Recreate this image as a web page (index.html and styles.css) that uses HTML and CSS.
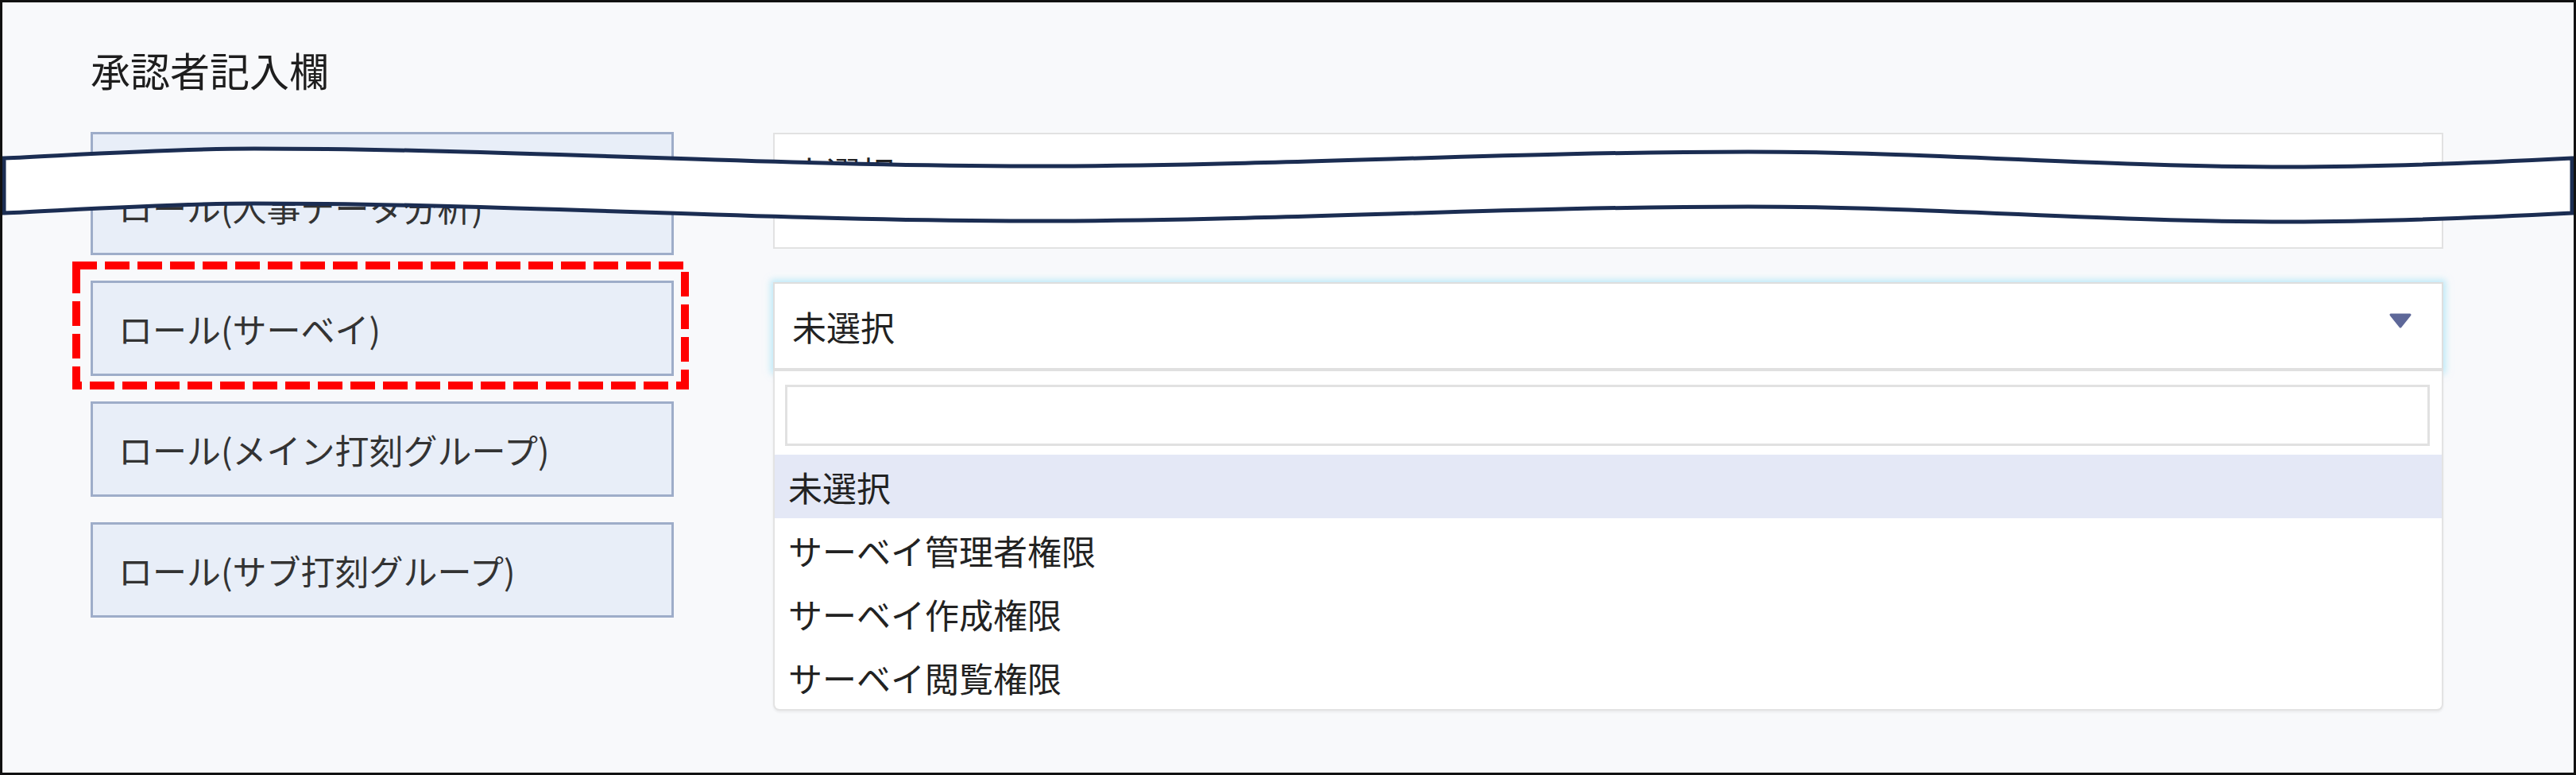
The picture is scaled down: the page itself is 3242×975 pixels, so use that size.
FILE: index.html
```html
<!DOCTYPE html>
<html lang="ja">
<head>
  <meta charset="UTF-8">
  <title>承認者記入欄</title>
  <link rel="stylesheet" href="styles.css">
</head>
<body>
  <div class="frame">
    <h2 class="title">承認者記入欄</h2>

    <div class="rows">
      <div class="row">
        <div class="label first">ロール(人事データ分析)</div>
        <div class="field">未選択</div>
      </div>

      <div class="row">
        <div class="label marked">
          ロール(サーベイ)
          <!-- 赤い点線の枠 -->
          <svg class="mark" width="776" height="161" viewBox="0 0 776 161">
            <rect x="5" y="5" width="766" height="151" fill="none" stroke="#ff0000" stroke-width="10" stroke-dasharray="21 20" stroke-linecap="square"/>
          </svg>
        </div>
        <div class="select">
          <span>未選択</span>
          <svg class="arrow" width="30" height="21" viewBox="0 0 30 21">
            <path d="M3 3 H27 L15 18 Z" fill="#5e6899" stroke="#5e6899" stroke-width="3" stroke-linejoin="round"/>
          </svg>

          <div class="panel">
            <div class="search-wrap">
              <div class="search"></div>
            </div>
            <ul class="options">
              <li class="active">未選択</li>
              <li>サーベイ管理者権限</li>
              <li>サーベイ作成権限</li>
              <li>サーベイ閲覧権限</li>
            </ul>
          </div>
        </div>
      </div>

      <div class="row">
        <div class="label">ロール(メイン打刻グループ)</div>
      </div>

      <div class="row">
        <div class="label">ロール(サブ打刻グループ)</div>
      </div>
    </div>

    <!-- 省略の波線 -->
    <svg class="cut" width="3242" height="110" viewBox="0 180 3242 110">
      <path d="M5 199 C110 194 220 187 320 187 C650 187 970 209 1300 209 C1600 209 1900 191 2200 191 C2430 191 2650 210 2880 210 C3000 210 3120 205 3237 199 L3237 268 C3120 274 3000 279 2880 279 C2650 279 2430 260 2200 260 C1900 260 1600 278 1300 278 C970 278 650 256 320 256 C220 256 110 263 5 268 Z" fill="#fff" stroke="#1b2d52" stroke-width="5"/>
    </svg>
  </div>
</body>
</html>
```

FILE: styles.css
```css
body {
  margin: 0;
  font-family: "Noto Sans CJK JP", "Noto Sans", sans-serif;
  background: #f8f9fb;
}

.frame {
  position: relative;
  width: 3242px;
  height: 975px;
  box-sizing: border-box;
  border: 3px solid #111;
  background: #f8f9fb;
  padding: 54px 0 0 111px;
  overflow: hidden;
}

.title {
  margin: 0 0 49px;
  font-size: 50px;
  line-height: 60px;
  font-weight: normal;
  color: #1e1e1e;
}

.rows {
  display: flex;
  flex-direction: column;
  gap: 32px;
}

.row {
  display: grid;
  grid-template-columns: 734px 2102px;
  column-gap: 125px;
  align-items: start;
}

.label {
  height: 120px;
  box-sizing: border-box;
  border: 3px solid #9eadc9;
  background: #e8eef8;
  display: flex;
  align-items: center;
  padding-left: 32px;
  font-size: 43px;
  line-height: 60px;
  color: #333;
}

.label.first {
  height: 155px;
  align-items: flex-start;
  padding-top: 61px;
}

.label.marked {
  position: relative;
}

.mark {
  position: absolute;
  left: -26px;
  top: -27px;
}

.field {
  margin-top: 1px;
  height: 146px;
  box-sizing: border-box;
  border: 2px solid #e2e2e2;
  background: #fff;
  padding: 17px 22px 0;
  font-size: 43px;
  line-height: 60px;
  color: #222;
}

.select {
  position: relative;
  margin-top: 2px;
  height: 112px;
  box-sizing: border-box;
  border: 2px solid #dedede;
  border-bottom: 4px solid #e0e0e0;
  background: #fff;
  box-shadow: 0 0 8px 3px rgba(140, 220, 245, 0.55);
  display: flex;
  align-items: center;
  justify-content: space-between;
  padding: 0 37px 0 22px;
  font-size: 43px;
  line-height: 60px;
  color: #222;
}

.arrow {
  margin-bottom: 14px;
}

.panel {
  position: absolute;
  top: calc(100% + 4px);
  left: -2px;
  right: -2px;
  background: #fff;
  border: 2px solid #e3e3e3;
  border-top: none;
  border-radius: 0 0 8px 8px;
  box-shadow: 0 2px 3px rgba(0, 0, 0, 0.06);
  z-index: 2;
}

.search-wrap {
  padding: 17px 15px 11px 13px;
}

.search {
  height: 77px;
  box-sizing: border-box;
  border: 3px solid #e1e1e1;
  background: #fff;
}

.options {
  list-style: none;
  margin: 0;
  padding: 0;
}

.options li {
  height: 80px;
  display: flex;
  align-items: center;
  padding-left: 17px;
  font-size: 43px;
  color: #222;
}

.options li.active {
  background: #e4e8f6;
}

.cut {
  position: absolute;
  left: -3px;
  top: 177px;
  z-index: 3;
}
```
